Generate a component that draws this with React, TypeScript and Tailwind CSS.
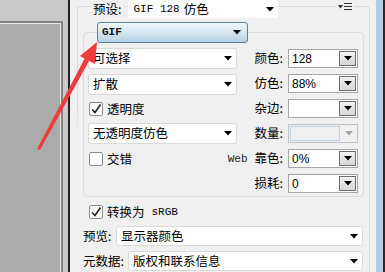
import React from "react";

const cjk = { fontFamily: '"Noto Sans CJK SC", "Noto Sans", sans-serif' };
const mono = { fontFamily: '"Liberation Mono", "DejaVu Sans Mono", monospace' };
const sans = { fontFamily: '"Liberation Sans", Arial, sans-serif' };

function Tri({ color = "#000" }: { color?: string }) {
  return (
    <svg width="8" height="5" viewBox="0 0 8 5" className="shrink-0">
      <polygon points="0,0 8,0 4,4.5" fill={color} />
    </svg>
  );
}

function WSelect({ children, w, h = 21 }: { children: React.ReactNode; w: number; h?: number }) {
  return (
    <div
      className="bg-white border border-[#d9d9d9] rounded-[3px] flex items-center justify-between pl-[4px] pr-[4px] text-[12.5px] text-black leading-none shrink-0 whitespace-nowrap"
      style={{ width: w, height: h, ...cjk }}
    >
      <span>{children}</span>
      <Tri />
    </div>
  );
}

function Combo({ value, disabled }: { value?: string; disabled?: boolean }) {
  if (disabled) {
    return (
      <div className="w-[70px] h-[19px] border border-[#c4c4c4] bg-[#f0f0f0] flex items-stretch shrink-0">
        <div className="flex-1 border border-[#b5d3ee] m-[1px]" />
        <div className="w-[16px] flex items-center justify-center">
          <Tri color="#a8a8a8" />
        </div>
      </div>
    );
  }
  return (
    <div className="w-[70px] h-[19px] border border-[#a6a6a6] bg-white flex items-stretch shrink-0">
      <div className="flex-1 flex items-center pl-[3px] text-[12px] leading-none text-black" style={sans}>
        {value}
      </div>
      <div className="w-[17px] m-[1px] ml-0 border border-[#6f6f6f] bg-gradient-to-b from-[#f2f2f2] to-[#d6d6d6] flex items-center justify-center">
        <Tri />
      </div>
    </div>
  );
}

function Check({ checked }: { checked?: boolean }) {
  return (
    <div className="w-[14px] h-[14px] border border-[#8e8f8f] rounded-[2px] bg-white flex items-center justify-center shrink-0">
      {checked && (
        <svg width="12" height="12" viewBox="0 0 12 12">
          <path d="M2 6.5 L5 9.5 L10.5 1.5" fill="none" stroke="#222" strokeWidth="1.6" />
        </svg>
      )}
    </div>
  );
}

function RRow({ label, children, web }: { label: string; children: React.ReactNode; web?: boolean }) {
  return (
    <div className="h-[19px] flex items-center justify-end gap-[5px] whitespace-nowrap">
      <div className="flex items-center text-[12.5px] leading-none text-black whitespace-nowrap" style={cjk}>
        {web && (
          <span className="text-[11px] mr-[7px] mt-[2px] text-[#222]" style={mono}>
            Web
          </span>
        )}
        <span>{label}</span>
      </div>
      {children}
    </div>
  );
}

export default function App() {
  return (
    <div className="w-[385px] h-[272px] flex overflow-hidden relative bg-[#f0f0f0]" style={cjk}>
      {/* left gray canvas */}
      <div className="w-[68px] h-full bg-[#c9c9c9] pt-[21px] flex flex-col shrink-0">
        <div className="w-[63px] flex-1 bg-[#ababab] border-t-2 border-r-2 border-[#828282] shadow-[inset_-1px_1px_0_#e6e6e6]" />
      </div>
      <div className="w-[2px] h-full bg-[#202020] shrink-0" />

      {/* main panel */}
      <div className="w-[306px] h-full bg-[#f0f0f0] pt-[6px] pl-[7px] pr-[6px] shrink-0">
        <div className="h-[300px] border-t border-r border-[#d6dde2] rounded-tr-[4px] pl-px bg-no-repeat bg-[length:1px_100%] bg-[linear-gradient(to_bottom,#d6dde2_0,#d6dde2_100px,transparent_130px)]">
          {/* preset row */}
          <div className="-mt-[7px] h-[18px] flex items-start whitespace-nowrap">
            <div className="ml-[13px] px-[2px] bg-[#f0f0f0] text-[12.5px] leading-none pt-[3px] text-black">预设:</div>
            <div className="ml-[5px] w-[150px] h-[18px] bg-white flex items-center justify-between pl-[5px] pr-[4px] text-[12.5px] leading-none shrink-0">
              <span className="flex items-center gap-[4px]">
                <span className="text-[11px]" style={mono}>GIF 128</span>
                <span>仿色</span>
              </span>
              <Tri />
            </div>
            <div className="ml-[58px] mt-[3px] px-[2px] bg-[#f0f0f0] flex items-center gap-[1px]">
              <svg width="5" height="4" viewBox="0 0 5 4">
                <polygon points="0,0 5,0 2.5,3.5" fill="#333" />
              </svg>
              <svg width="8" height="7" viewBox="0 0 8 7">
                <rect x="0" y="0" width="8" height="1" fill="#333" />
                <rect x="0" y="3" width="8" height="1" fill="#333" />
                <rect x="0" y="6" width="8" height="1" fill="#333" />
              </svg>
            </div>
          </div>

          {/* inner group */}
          <div className="mt-[14px] ml-[5px] mr-[5px] h-[165px] border border-[#dcdcdc] rounded-[4px]">
            <div className="-mt-[11px] ml-[13px] w-[151px] h-[21px] rounded-[3px] border border-[#5d7f97] bg-gradient-to-b from-[#f0f6fa] via-[#d5e6f1] to-[#b5d1e4] flex items-center justify-between pl-[4px] pr-[6px]">
              <span className="text-[11px] font-bold text-[#111]" style={mono}>GIF</span>
              <Tri />
            </div>
            <div className="mt-[5px] flex">
              <div className="ml-[4px] w-[149px] flex flex-col shrink-0 whitespace-nowrap">
                <WSelect w={149}>可选择</WSelect>
                <div className="mt-[5px]">
                  <WSelect w={149}>扩散</WSelect>
                </div>
                <div className="mt-[7px] h-[14px] flex items-center gap-[4px] pl-[1px] text-[12.5px] leading-none">
                  <Check checked />
                  <span>透明度</span>
                </div>
                <div className="mt-[7px]">
                  <WSelect w={149}>无透明度仿色</WSelect>
                </div>
                <div className="mt-[8px] h-[14px] flex items-center gap-[4px] pl-[1px] text-[12.5px] leading-none">
                  <Check />
                  <span>交错</span>
                </div>
              </div>
              <div className="flex-1 min-w-0 mt-[1px] pr-[5px] flex flex-col gap-[6px]">
                <RRow label="颜色:">
                  <Combo value="128" />
                </RRow>
                <RRow label="仿色:">
                  <Combo value="88%" />
                </RRow>
                <RRow label="杂边:">
                  <Combo value="" />
                </RRow>
                <RRow label="数量:">
                  <Combo disabled />
                </RRow>
                <RRow label="靠色:" web>
                  <Combo value="0%" />
                </RRow>
                <RRow label="损耗:">
                  <Combo value="0" />
                </RRow>
              </div>
            </div>
          </div>

          {/* below inner group */}
          <div className="mt-[8px] ml-[11px] h-[14px] flex items-center gap-[4px] text-[12.5px] leading-none whitespace-nowrap">
            <Check checked />
            <span>转换为</span>
            <span className="text-[11px] ml-[3px]" style={mono}>sRGB</span>
          </div>
          <div className="mt-[7px] ml-[5px] flex items-center gap-[4px] whitespace-nowrap">
            <span className="text-[12.5px] leading-none w-[29px] shrink-0">预览:</span>
            <WSelect w={247} h={20}>显示器颜色</WSelect>
          </div>
          <div className="mt-[5px] ml-[5px] flex items-center gap-[4px] whitespace-nowrap">
            <span className="text-[12.5px] leading-none w-[41px] shrink-0">元数据:</span>
            <WSelect w={235} h={20}>版权和联系信息</WSelect>
          </div>
        </div>
      </div>

      <div className="w-[7px] h-full bg-[#b3cde8] shrink-0" />
      <div className="w-[2px] h-full bg-[#2b2b2b] shrink-0" />

      {/* red annotation arrow */}
      <svg className="absolute left-0 top-0 pointer-events-none" width="385" height="272" viewBox="0 0 385 272">
        <polygon points="37,149 40,150 89,61 85,58" fill="#ef3b3b" />
        <polygon points="97,42 95,64 80,56" fill="#ef3b3b" />
      </svg>
    </div>
  );
}
